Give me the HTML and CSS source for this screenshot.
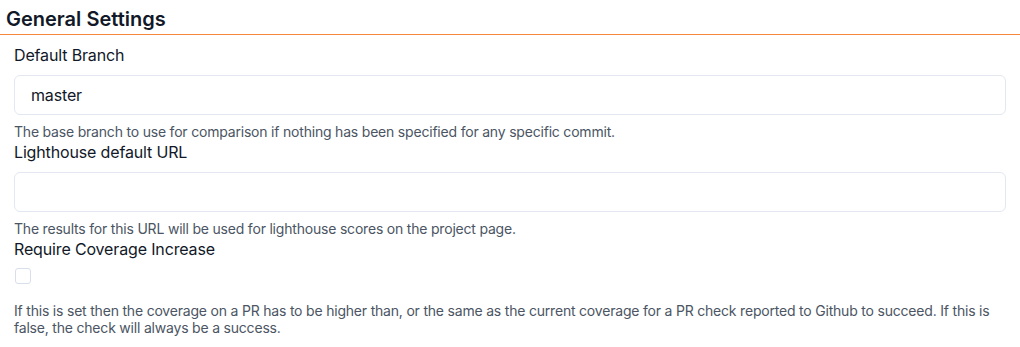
FILE: index.html
```html
<html>

<head>
    <meta name="viewport" content="width=device-width, initial-scale=1.0">
    <meta charset="UTF-8">
    <title>General Settings</title>
    <link rel="stylesheet" href="styles.css">
</head>

<body>
    <div id="settings">
        <h2 class="section-title">General Settings</h2>
        <form class="settings-form">
            <div class="field">
                <label for="branch">Default Branch</label>
                <input type="text" id="branch" class="text-input" value="master">
                <p class="help">The base branch to use for comparison if nothing has been specified for any specific commit.</p>
            </div>
            <div class="field">
                <label for="lighthouse">Lighthouse default URL</label>
                <input type="text" id="lighthouse" class="text-input">
                <p class="help">The results for this URL will be used for lighthouse scores on the project page.</p>
            </div>
            <div class="field">
                <label for="coverage">Require Coverage Increase</label>
                <input type="checkbox" id="coverage" class="check-input">
                <p class="help help-check">If this is set then the coverage on a PR has to be higher than, or the same as the current coverage for a PR check reported to Github to succeed. If this is false, the check will always be a success.</p>
            </div>
        </form>
    </div>
</body>

</html>
```

FILE: styles.css
```css
body {
    margin: 0;
    background: #ffffff;
    font-family: Inter, "Noto Sans", sans-serif;
    color: #111827;
}

.section-title {
    margin: 0;
    padding: 5px 6px 1px 6px;
    font-size: 20px;
    line-height: 28px;
    font-weight: 600;
    color: #111827;
    border-bottom: 1px solid #f7893d;
}

.settings-form {
    margin: 0;
    padding: 8px 14px 0 14px;
}

.field label {
    display: block;
    font-size: 16px;
    line-height: 24px;
    font-weight: 400;
    letter-spacing: -0.15px;
    color: #111827;
}

.text-input {
    display: block;
    box-sizing: border-box;
    width: 100%;
    height: 40px;
    margin-top: 8px;
    padding: 0 16px;
    border: 1px solid #e3e7f0;
    border-radius: 6px;
    font-family: inherit;
    font-size: 16px;
    letter-spacing: -0.15px;
    color: #111827;
    background: #ffffff;
    outline: none;
}

.check-input {
    -webkit-appearance: none;
    appearance: none;
    display: block;
    width: 16px;
    height: 16px;
    margin: 7px 0 0 1px;
    border: 1px solid #d9dfea;
    border-radius: 3px;
    background: #ffffff;
}

.help {
    margin: 8px 0 0 0;
    font-size: 14px;
    line-height: 17px;
    letter-spacing: -0.2px;
    color: #4b5563;
}

.help-check {
    margin-top: 18px;
}
```
